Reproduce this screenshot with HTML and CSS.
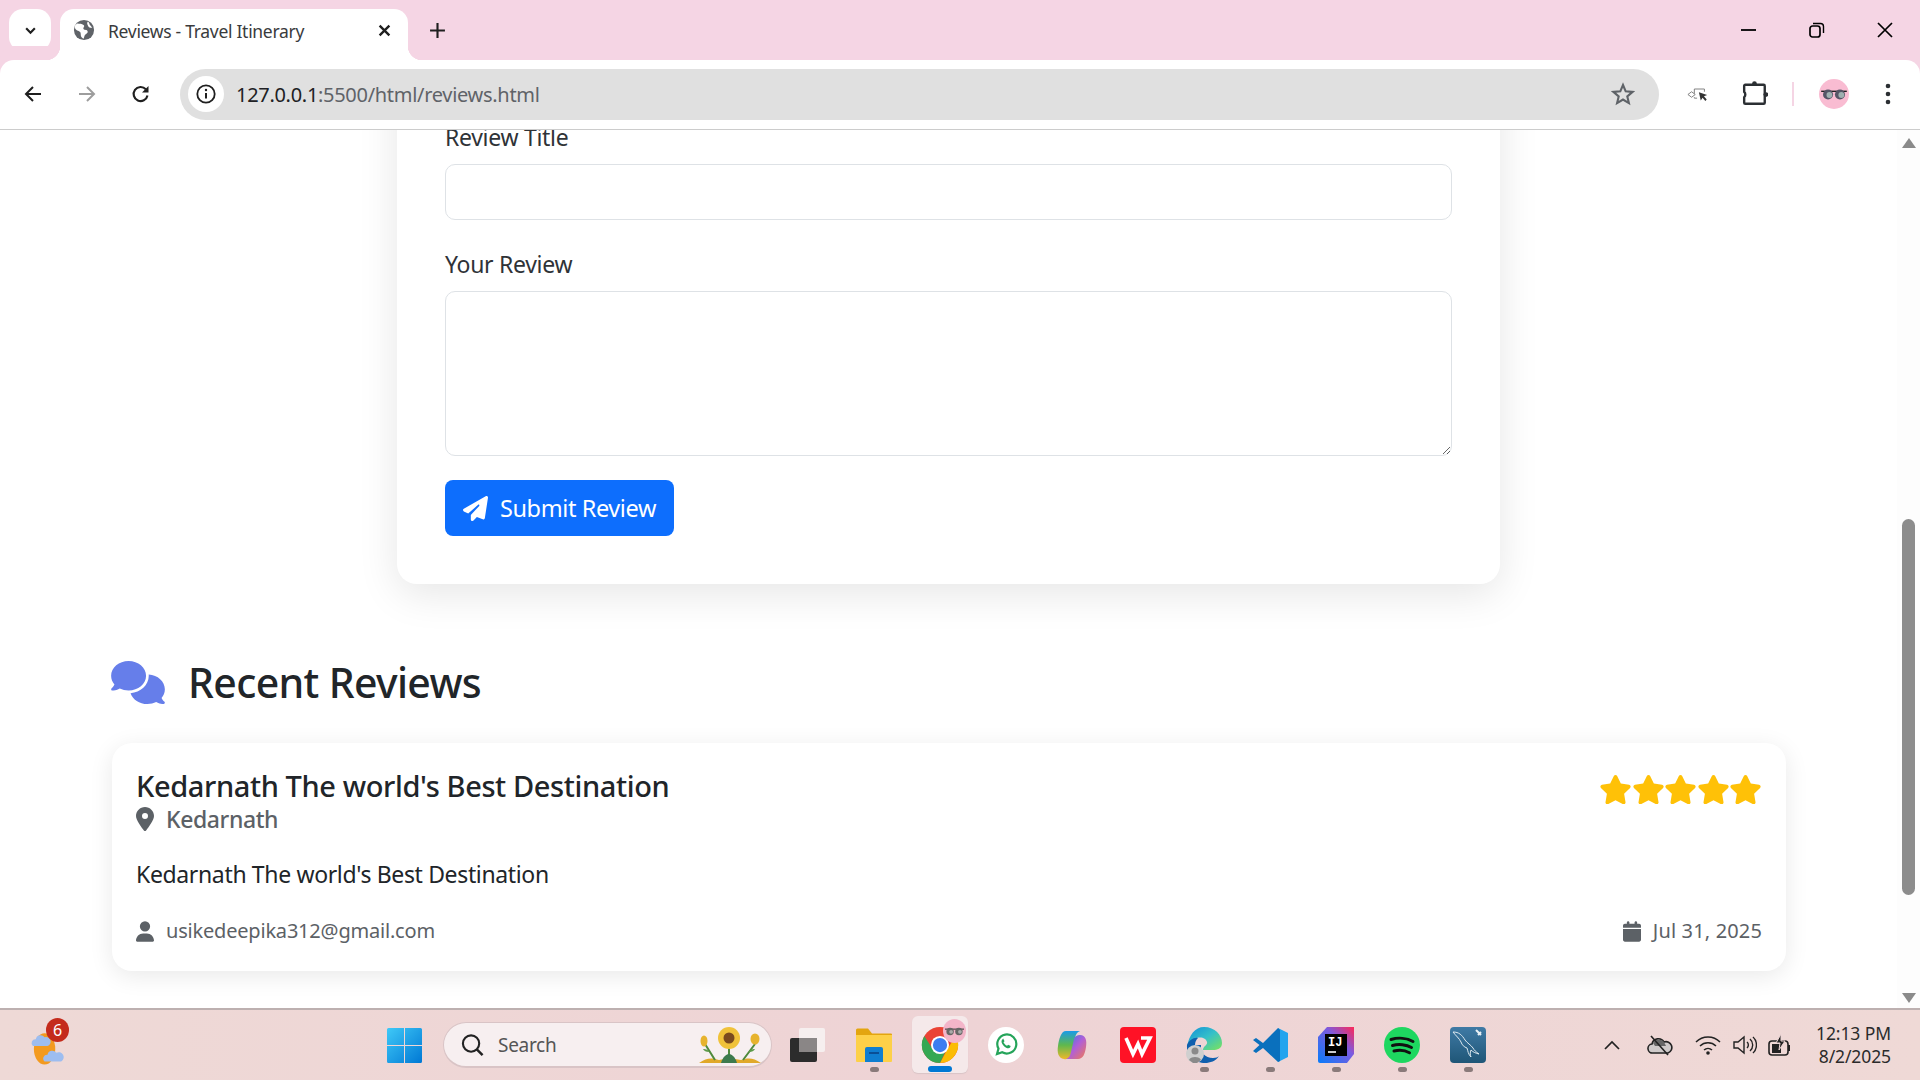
FILE: index.html
```html
<!DOCTYPE html>
<html lang="en">
<head>
<meta charset="utf-8">
<title>Reviews - Travel Itinerary</title>
<link rel="stylesheet" href="styles.css">
</head>
<body>
<header class="tabstrip">
  <div class="tab-search"><svg class="ic12" viewBox="0 0 12 12"><path d="M2 4l4 4 4-4" fill="none" stroke="#1f1f1f" stroke-width="2"/></svg></div>
  <div class="tab">
    <svg class="favicon" viewBox="0 0 24 24"><circle cx="12" cy="12" r="11" fill="#5f6368"/><path d="M4.500 5c3 .5 5 0 7 1.500s-1 3 0 4.500 4 .5 4.500 2.500-3 3-3.500 5-.5 2-1 3c-4-1.500-2.500-5-3.500-7s-4-1.500-5.500-4-.5-3.500 2-5.500zM16.500 3c2 1.500 1 3 2.500 4l2 2.500c-1.500.5-3.500 0-4.500-2s-1.500-3-.5-4.500z" fill="#fff"/></svg>
    <span class="tab-title">Reviews - Travel Itinerary</span>
    <svg class="tab-close" viewBox="0 0 12 12"><path d="M1.500 1.500l9 9m0-9l-9 9" stroke="#1f1f1f" stroke-width="2.200" fill="none"/></svg>
  </div>
  <svg class="newtab" viewBox="0 0 16 16"><path d="M8 1v14M1 8h14" stroke="#1f1f1f" stroke-width="2" fill="none"/></svg>
  <div class="winctl">
    <svg class="win-ic" viewBox="0 0 16 16"><path d="M0 8h15" stroke="#000" stroke-width="1.800"/></svg>
    <svg class="win-ic" viewBox="0 0 16 16"><rect x="1" y="4" width="10" height="11" rx="2.500" fill="none" stroke="#000" stroke-width="1.700"/><path d="M4 1.500h7.500a3 3 0 0 1 3 3V11" fill="none" stroke="#000" stroke-width="1.400"/></svg>
    <svg class="win-ic" viewBox="0 0 16 16"><path d="M1 1l14 14m0-14L1 15" stroke="#000" stroke-width="1.700" fill="none"/></svg>
  </div>
</header>

<nav class="toolbar">
  <svg class="nav-ic" viewBox="0 0 20 20"><path d="M18 10H3m7-7l-7 7 7 7" fill="none" stroke="#1f1f1f" stroke-width="2"/></svg>
  <svg class="nav-ic" viewBox="0 0 20 20"><path d="M2 10h15m-7-7l7 7-7 7" fill="none" stroke="#9d9d9d" stroke-width="2"/></svg>
  <svg class="nav-ic" viewBox="0 0 20 20"><path d="M16.500 11.500a7 7 0 1 1-1.700-6.200" fill="none" stroke="#1f1f1f" stroke-width="2.100"/><path d="M17.500 2v6.500H11z" fill="#1f1f1f"/></svg>
  <div class="omnibox">
    <div class="site-info"><svg class="info-ic" viewBox="0 0 20 20"><circle cx="10" cy="10" r="8.700" fill="none" stroke="#1f1f1f" stroke-width="1.800"/><path d="M10 9v5.500" stroke="#1f1f1f" stroke-width="2"/><circle cx="10" cy="6" r="1.200" fill="#1f1f1f"/></svg></div>
    <span class="url"><span class="url-host">127.0.0.1</span>:5500/html/reviews.html</span>
    <svg class="star-ic" viewBox="0 0 24 24"><path d="M12 3l2.700 6.300 6.800.6-5.200 4.500 1.600 6.700L12 17.500l-5.900 3.600 1.600-6.700L2.500 9.900l6.800-.6z" fill="none" stroke="#5f6368" stroke-width="2.100"/></svg>
  </div>
  <svg class="ext-cursor" viewBox="0 0 24 16"><path d="M1 8l4-3 4 3-4 3z" fill="none" stroke="#777" stroke-width="1"/><path d="M8 7V2h11v3M8 11v1h3" fill="none" stroke="#777" stroke-width="1"/><path d="M13 5.500l9 3-3.500 1.500 3 3.500-1.500 1.500-3-3.500-2 3z" fill="#333"/></svg>
  <svg class="puzzle" viewBox="0 0 24 24"><path d="M3 3.500h17a1 1 0 0 1 1 1V20a1 1 0 0 1-1 1H3a1 1 0 0 1-1-1v-5a3.500 3.500 0 0 0 0-5V4.500a1 1 0 0 1 1-1z" fill="none" stroke="#2b2f33" stroke-width="2.200"/><circle cx="11.500" cy="2.500" r="2.200" fill="#2b2f33"/><circle cx="22" cy="12.500" r="2.200" fill="#2b2f33"/></svg>
  <span class="tb-sep"></span>
  <div class="avatar"><svg class="glasses" viewBox="0 0 28 12"><path d="M0 2.500h28" stroke="#222" stroke-width="1.500"/><circle cx="7.500" cy="6" r="5.500" fill="#556"/><circle cx="20.500" cy="6" r="5.500" fill="#556"/><circle cx="9" cy="6.500" r="3.200" fill="#9fb0b0"/><circle cx="22" cy="6.500" r="3.200" fill="#9fb0b0"/></svg></div>
  <svg class="dots" viewBox="0 0 6 24"><circle cx="3" cy="4" r="2.300" fill="#2b2f33"/><circle cx="3" cy="12" r="2.300" fill="#2b2f33"/><circle cx="3" cy="20" r="2.300" fill="#2b2f33"/></svg>
</nav>

<div class="viewport">
  <main class="page">
    <section class="form-card">
      <div class="form-group">
        <label class="form-label" for="title">Review Title</label>
        <input class="form-control" id="title" type="text">
      </div>
      <div class="form-group">
        <label class="form-label" for="body">Your Review</label>
        <textarea class="form-control form-area" id="body"></textarea>
      </div>
      <button class="btn-submit" type="button">
        <svg class="plane" viewBox="0 0 512 512"><path d="M498.100 5.600c10.100 7 15.400 19.100 13.500 31.200l-64 416c-1.500 9.700-7.400 18.200-16 23s-18.900 5.400-28 1.600L284 427.700l-68.500 74.100c-8.900 9.700-22.900 12.900-35.200 8.100S160 493.200 160 480V396.400c0-4 1.500-7.800 4.200-10.700L331.800 202.800c5.800-6.300 5.600-16-.4-22s-15.700-6.400-22-.7L106 360.800 17.700 316.600C7.100 311.300 .3 300.700 0 288.900s5.900-22.800 16.100-28.700l448-256c10.700-6.100 23.900-5.500 34 1.400z"/></svg>
        Submit Review
      </button>
    </section>

    <h2 class="section-title">
      <svg class="comments" viewBox="0 0 640 512"><path d="M208 352c114.900 0 208-78.800 208-176S322.900 0 208 0S0 78.800 0 176c0 38.600 14.700 74.300 39.600 103.400c-3.500 9.400-8.700 17.700-14.200 24.700c-4.800 6.200-9.700 11-13.300 14.300c-1.800 1.600-3.300 2.900-4.300 3.700c-.5 .4-.9 .7-1.100 .8l-.2 .2 0 0 0 0C1 327.200-1.400 334.400 .8 340.900S9.100 352 16 352c21.800 0 43.800-5.600 62.100-12.500c9.200-3.500 17.800-7.400 25.300-11.400C134.100 343.300 169.800 352 208 352zM448 176c0 112.300-99.100 196.900-216.500 207C255.800 457.400 336.400 512 432 512c38.200 0 73.900-8.700 104.700-23.900c7.500 4 16 7.900 25.200 11.400c18.300 6.900 40.300 12.500 62.100 12.500c6.900 0 13.100-4.500 15.200-11.100c2.100-6.600-.2-13.800-5.800-17.900l0 0 0 0-.2-.2c-.2-.2-.6-.4-1.100-.8c-1-.8-2.500-2-4.300-3.700c-3.600-3.300-8.500-8.100-13.300-14.300c-5.500-7-10.700-15.400-14.200-24.700c24.900-29 39.600-64.700 39.600-103.400c0-92.800-84.900-168.900-192.600-175.500c.4 5.100 .6 10.300 .6 15.500z"/></svg>
      <span>Recent Reviews</span>
    </h2>

    <article class="review-card">
      <div class="review-head">
        <div>
          <h3 class="review-title">Kedarnath The world's Best Destination</h3>
          <p class="review-place"><svg class="pin" viewBox="0 0 384 512"><path d="M215.700 499.200C267 435 384 279.400 384 192C384 86 298 0 192 0S0 86 0 192c0 87.400 117 243 168.300 307.200c12.300 15.300 35.100 15.300 47.400 0zM192 128a64 64 0 1 1 0 128 64 64 0 1 1 0-128z"/></svg>Kedarnath</p>
        </div>
        <div class="stars">
          <svg class="star" viewBox="0 0 576 512"><path d="M316.900 18C311.600 7 300.400 0 288.100 0s-23.400 7-28.800 18L195 150.300 51.400 171.500c-12 1.800-22 10.200-25.700 21.700s-.7 24.200 7.900 32.700L137.800 329 113.200 474.700c-2 12 3 24.200 12.900 31.300s23 8 33.800 2.300l128.300-68.500 128.300 68.500c10.800 5.700 23.900 4.900 33.800-2.300s14.900-19.300 12.900-31.300L438.500 329 542.700 225.900c8.600-8.500 11.700-21.200 7.900-32.700s-13.700-19.900-25.700-21.700L381.200 150.300 316.900 18z"/></svg>
          <svg class="star" viewBox="0 0 576 512"><path d="M316.900 18C311.600 7 300.400 0 288.100 0s-23.400 7-28.800 18L195 150.300 51.400 171.500c-12 1.800-22 10.200-25.700 21.700s-.7 24.200 7.900 32.700L137.800 329 113.200 474.700c-2 12 3 24.200 12.900 31.300s23 8 33.800 2.300l128.300-68.500 128.300 68.500c10.800 5.700 23.900 4.900 33.800-2.300s14.900-19.300 12.900-31.300L438.500 329 542.700 225.900c8.600-8.500 11.700-21.200 7.900-32.700s-13.700-19.900-25.700-21.700L381.200 150.300 316.900 18z"/></svg>
          <svg class="star" viewBox="0 0 576 512"><path d="M316.900 18C311.600 7 300.400 0 288.100 0s-23.400 7-28.800 18L195 150.300 51.400 171.500c-12 1.800-22 10.200-25.700 21.700s-.7 24.200 7.900 32.700L137.800 329 113.200 474.700c-2 12 3 24.200 12.900 31.300s23 8 33.800 2.300l128.300-68.500 128.300 68.500c10.800 5.700 23.900 4.900 33.800-2.300s14.900-19.300 12.900-31.300L438.500 329 542.700 225.900c8.600-8.500 11.700-21.200 7.900-32.700s-13.700-19.900-25.700-21.700L381.200 150.300 316.900 18z"/></svg>
          <svg class="star" viewBox="0 0 576 512"><path d="M316.900 18C311.600 7 300.400 0 288.100 0s-23.400 7-28.800 18L195 150.300 51.400 171.500c-12 1.800-22 10.200-25.700 21.700s-.7 24.200 7.900 32.700L137.800 329 113.200 474.700c-2 12 3 24.200 12.900 31.300s23 8 33.800 2.300l128.300-68.500 128.300 68.500c10.800 5.700 23.900 4.900 33.800-2.300s14.900-19.300 12.900-31.300L438.500 329 542.700 225.900c8.600-8.500 11.700-21.200 7.900-32.700s-13.700-19.900-25.700-21.700L381.200 150.300 316.900 18z"/></svg>
          <svg class="star" viewBox="0 0 576 512"><path d="M316.900 18C311.600 7 300.400 0 288.100 0s-23.400 7-28.800 18L195 150.300 51.400 171.500c-12 1.800-22 10.200-25.700 21.700s-.7 24.200 7.900 32.700L137.800 329 113.200 474.700c-2 12 3 24.200 12.900 31.300s23 8 33.800 2.300l128.300-68.500 128.300 68.500c10.800 5.700 23.900 4.900 33.800-2.300s14.900-19.300 12.900-31.300L438.500 329 542.700 225.900c8.600-8.500 11.700-21.200 7.900-32.700s-13.700-19.900-25.700-21.700L381.200 150.300 316.900 18z"/></svg>
        </div>
      </div>
      <p class="review-body">Kedarnath The world's Best Destination</p>
      <div class="review-meta">
        <span class="meta-item"><svg class="meta-ic" viewBox="0 0 448 512"><path d="M224 256A128 128 0 1 0 224 0a128 128 0 1 0 0 256zm-45.700 48C79.800 304 0 383.800 0 482.300C0 498.700 13.300 512 29.700 512H418.300c16.400 0 29.700-13.300 29.700-29.700C448 383.800 368.200 304 269.700 304H178.300z"/></svg>usikedeepika312@gmail.com</span>
        <span class="meta-item meta-date"><svg class="meta-ic" viewBox="0 0 448 512"><path d="M96 32V64H48C21.500 64 0 85.500 0 112v48H448V112c0-26.500-21.500-48-48-48H352V32c0-17.700-14.300-32-32-32s-32 14.300-32 32V64H160V32c0-17.700-14.300-32-32-32S96 14.300 96 32zM448 192H0V464c0 26.500 21.500 48 48 48H400c26.500 0 48-21.500 48-48V192z"/></svg>Jul 31, 2025</span>
      </div>
    </article>
  </main>
  <aside class="scrollbar">
    <span class="arrow-up"></span>
    <span class="thumb"></span>
    <span class="arrow-down"></span>
  </aside>
</div>

<footer class="taskbar">
  <div class="weather">
    <svg class="weather-ic" viewBox="0 0 36 42"><ellipse cx="15" cy="25" rx="11" ry="16" fill="#f39a1f"/><path d="M3 22a4 4 0 0 1 3-7 5 5 0 0 1 9-2 4 4 0 0 1 3 9z" fill="#9dbdf0"/><path d="M15 38a4 4 0 0 1 3-7 5 5 0 0 1 9-2 5 5 0 0 1 5 9z" fill="#9dbdf0"/></svg>
    <span class="badge">6</span>
  </div>
  <svg class="start" viewBox="0 0 35 35">
    <defs><linearGradient id="wing" x1="0" y1="0" x2="1" y2="1"><stop offset="0" stop-color="#3fc9f7"/><stop offset="1" stop-color="#0078d4"/></linearGradient></defs>
    <path d="M0 1.500A1.500 1.500 0 0 1 1.500 0H17v17H0zM18 0h15.500A1.500 1.500 0 0 1 35 1.500V17H18zM0 18h17v17H1.500A1.500 1.500 0 0 1 0 33.500zM18 18h17v15.500a1.500 1.500 0 0 1-1.500 1.500H18z" fill="url(#wing)"/>
  </svg>
  <div class="search">
    <svg class="search-ic" viewBox="0 0 24 24"><circle cx="10.500" cy="10.500" r="8.500" fill="none" stroke="#222" stroke-width="2.200"/><path d="M16.500 16.500l6 6" stroke="#222" stroke-width="2.600"/></svg>
    <span class="search-text">Search</span>
    <svg class="flower" viewBox="0 0 62 38">
      <path d="M0 37c8-6 14-5 20-3l10-2 12 2c6-2 12-3 20 3z" fill="#e0a92a"/><path d="M30 20v15M6 18l10 16M56 18l-12 16" stroke="#4f8a3c" stroke-width="2" fill="none"/><path d="M22 37c2-7 6-9 8-9s6 2 8 9z" fill="#3d7a4d"/><path d="M10 26c-3 0-5-1-6-3 3 0 6 1 6 3zM50 26c3 0 5-1 6-3-3 0-6 1-6 3z" fill="#5c9a4a"/>
      <circle cx="30" cy="12" r="11" fill="#f0c23a"/><circle cx="30" cy="12" r="5.500" fill="#7a4a1e"/>
      <ellipse cx="5" cy="15" rx="3.500" ry="5.500" fill="#e7b32d"/><ellipse cx="56" cy="13" rx="4.500" ry="5.500" fill="#e7b32d"/>
    </svg>
  </div>
  <div class="apps">
    <div class="app"><svg class="app-ic" viewBox="0 0 36 36"><rect x="0" y="11" width="27" height="24" rx="2" fill="#2c2c2c"/><rect x="9" y="1" width="26" height="24" rx="2" fill="#f7f3f3" fill-opacity=".85"/><rect x="9" y="11" width="18" height="14" fill="#8a8686"/></svg></div>
    <div class="app app-open"><svg class="app-ic" viewBox="0 0 36 36"><path d="M0 3a1.500 1.500 0 0 1 1.500-1.500H12l4 5h19a1 1 0 0 1 1 1V12H0z" fill="#e3a50f"/><path d="M0 8h36v26a1 1 0 0 1-1 1H1a1 1 0 0 1-1-1z" fill="#fdd048"/><path d="M9 22a2 2 0 0 1 2-2h14a2 2 0 0 1 2 2v13H9z" fill="#0f7ed0"/><path d="M13 26h10" stroke="#0a4f95" stroke-width="2"/></svg></div>
    <div class="app app-active">
      <svg class="app-ic chrome" viewBox="0 0 40 40"><circle cx="20" cy="20" r="19" fill="#ea4335"/><path d="M36.500 10.500A19 19 0 0 1 20 39L28 24z" fill="#fbbc04"/><path d="M3.500 10.500A19 19 0 0 0 20 39L27 24 12 24z" fill="#34a853"/><circle cx="20" cy="20" r="9.500" fill="#fff"/><circle cx="20" cy="20" r="7.500" fill="#3c7df0"/></svg>
      <span class="app-profile"><svg class="glasses-sm" viewBox="0 0 28 12"><path d="M0 2.500h28" stroke="#333" stroke-width="1.500"/><circle cx="7.500" cy="6" r="5.500" fill="#666"/><circle cx="20.500" cy="6" r="5.500" fill="#666"/><circle cx="9" cy="6.500" r="2.800" fill="#aaa"/><circle cx="22" cy="6.500" r="2.800" fill="#aaa"/></svg></span>
    </div>
    <div class="app"><svg class="app-ic" viewBox="0 0 36 36"><circle cx="18" cy="18" r="18" fill="#fff"/><path d="M9 27l1.500-5.400a9.500 9.500 0 1 1 3.700 3.700z" fill="none" stroke="#25a45a" stroke-width="2.200"/><path d="M14.300 12.500c-1.500 1.300-1 3.800 1.500 6.400s5 3 6.300 1.700l.6-1.500-2.600-1.400-1 1c-1.700-.7-2.900-1.900-3.600-3.500l1-1-1.300-2.700z" fill="#25a45a"/></svg></div>
    <div class="app"><svg class="app-ic" viewBox="0 0 36 36"><defs><linearGradient id="cop1" x1="0" y1="0" x2="0" y2="1"><stop offset="0" stop-color="#1a9be8"/><stop offset=".5" stop-color="#5fb84d"/><stop offset="1" stop-color="#f0b82a"/></linearGradient><linearGradient id="cop2" x1="0" y1="0" x2="1" y2="1"><stop offset="0" stop-color="#2e7be0"/><stop offset=".5" stop-color="#b05fd8"/><stop offset="1" stop-color="#f27b50"/></linearGradient></defs><path d="M12 4h14c-3 1-4 3-5 7l-3 15c-1 4-4 7-8 6-6-1-7-7-6-13 1-7 3-15 8-15z" fill="url(#cop1)"/><path d="M24 32H12c3-1 4-3 5-7l3-13c1-3 3-4 6-4 6 0 7 6 6 12-1 7-3 12-8 12z" fill="url(#cop2)"/></svg></div>
    <div class="app"><svg class="app-ic" viewBox="0 0 36 36"><rect width="36" height="36" rx="4" fill="#ff1226"/><path d="M6 11l7 16 5-10 4 10 8-16h-9" fill="none" stroke="#fff" stroke-width="3.600"/></svg></div>
    <div class="app app-open"><svg class="app-ic" viewBox="0 0 36 36"><defs><linearGradient id="edge" x1="0" y1="0" x2="1" y2="1"><stop offset="0" stop-color="#0f8ed8"/><stop offset=".5" stop-color="#35c0c9"/><stop offset="1" stop-color="#7be35a"/></linearGradient></defs><path d="M18 0c11 0 18 8 18 16 0 6-5 7-9 7H17c0-4 5-5 4-8-1-4-7-6-12-3-4 3-7 7-8 8C3 8 9 0 18 0z" fill="url(#edge)"/><path d="M15 18c-1 7 4 13 12 13 3 0 5-1 6-2-3 5-9 7-14 7C10 36 0 30 1 18c2-5 7-8 11-7-2 2-3 4-3 7z" fill="#0f5fae"/><circle cx="9" cy="27" r="9" fill="#cfcfcf"/><circle cx="9" cy="24" r="3.500" fill="#8a8a8a"/><path d="M3 33c1-4 11-4 12 0l-4 3H7z" fill="#8a8a8a"/></svg></div>
    <div class="app app-open"><svg class="app-ic" viewBox="0 0 36 36"><path d="M26 1l10 5v24l-10 5z" fill="#22a4ee"/><path d="M26 1L11 16l-7-5-3 2 6.500 5L1 24l3 2 7-5 15 14 2-1V3z" fill="#0a70bd"/></svg></div>
    <div class="app app-open"><svg class="app-ic" viewBox="0 0 36 36"><defs><linearGradient id="ij" x1="0" y1="1" x2="1" y2="0"><stop offset="0" stop-color="#087cfa"/><stop offset=".6" stop-color="#7b5be0"/><stop offset="1" stop-color="#fe2857"/></linearGradient></defs><path d="M9 0h27v27l-7 9H2a2 2 0 0 1-2-2V10z" fill="url(#ij)"/><rect x="7" y="7" width="22" height="22" fill="#000"/><text class="ij-text" x="10" y="19">IJ</text><path d="M10 25h8" stroke="#fff" stroke-width="1.600"/></svg></div>
    <div class="app app-open"><svg class="app-ic" viewBox="0 0 36 36"><circle cx="18" cy="18" r="18" fill="#1ed760"/><path d="M7 12.500c7-2 16-1.500 22 2M8.500 18.500c6-1.700 14-1 19 2M10 24c5-1.300 11-.8 15.500 1.700" fill="none" stroke="#111" stroke-width="3" stroke-linecap="round"/></svg></div>
    <div class="app app-open"><svg class="app-ic" viewBox="0 0 36 36"><defs><linearGradient id="my" x1="0" y1="0" x2="0" y2="1"><stop offset="0" stop-color="#3f7aa5"/><stop offset="1" stop-color="#1f5677"/></linearGradient></defs><rect width="36" height="36" rx="4" fill="url(#my)"/><path d="M3 5c6 0 9 3 12 8 2 3 6 5 8 8 1 2 3 4 6 6-4-1-6-2-8-4-1 3-1 5 0 7-3-3-3-6-4-9-3-1-5-3-6-6C9 11 6 9 3 5z" fill="none" stroke="#dbe8f0" stroke-width="1"/><path d="M26 3l5 5m-3 0l3-3" stroke="#e8f0f5" stroke-width="2"/></svg></div>
  </div>
  <div class="tray">
    <svg class="tray-chev" viewBox="0 0 16 10"><path d="M1 9l7-7 7 7" fill="none" stroke="#222" stroke-width="1.700"/></svg>
    <svg class="tray-cloud" viewBox="0 0 26 22"><path d="M6 19a4.500 4.500 0 0 1-1-9 6.500 6.500 0 0 1 12-2 5 5 0 0 1 4 11z" fill="#cfcaca" stroke="#222" stroke-width="1.600"/><path d="M6 9a6.500 6.500 0 0 1 11-1l2 4H8z" fill="#666"/><path d="M4 2l17 19" stroke="#222" stroke-width="1.600"/></svg>
    <svg class="tray-wifi" viewBox="0 0 26 20"><path d="M1 7a17 17 0 0 1 24 0M5 11a11.500 11.500 0 0 1 16 0M9 15a6 6 0 0 1 8 0" fill="none" stroke="#222" stroke-width="1.500"/><circle cx="13" cy="18" r="1.800" fill="#222"/></svg>
    <svg class="tray-vol" viewBox="0 0 24 20"><path d="M1 7h4l6-5v16l-6-5H1z" fill="none" stroke="#222" stroke-width="1.400"/><path d="M14 7a4 4 0 0 1 0 6M17 4a8 8 0 0 1 0 12M20 2a11 11 0 0 1 0 16" fill="none" stroke="#222" stroke-width="1.400"/></svg>
    <svg class="tray-batt" viewBox="0 0 24 22"><rect x="1" y="7" width="19" height="14" rx="3" fill="none" stroke="#222" stroke-width="1.600"/><path d="M21 11v6" stroke="#222" stroke-width="2"/><path d="M4 10h9v9H4z" fill="#222"/><path d="M13 0l-5 9h4l-1 7 6-9h-4z" fill="#222" stroke="#eed7d7" stroke-width="1"/></svg>
    <div class="clock"><span>12:13 PM</span><span>8/2/2025</span></div>
  </div>
</footer>
</body>
</html>
```
FILE: styles.css
```css
* { box-sizing: border-box; }
html, body { height: 100%; }
body {
  margin: 0;
  height: 100vh;
  overflow: hidden;
  display: flex;
  flex-direction: column;
  font-family: "Noto Sans", "Open Sans", sans-serif;
  color: #212529;
  background: #fff;
}
svg { display: block; flex: none; }

/* tab strip */
.tabstrip {
  height: 60px;
  flex: none;
  display: flex;
  align-items: flex-start;
  padding: 9px 0 0 9px;
  background: #f5d5e4;
}
.tab-search {
  width: 42px;
  height: 42px;
  border-radius: 14px;
  background: #fff;
  display: flex;
  align-items: center;
  justify-content: center;
}
.ic12 { width: 13px; height: 13px; }
.tab {
  position: relative;
  margin-left: 9px;
  width: 348px;
  height: 51px;
  background: #fff;
  border-radius: 14px 14px 0 0;
  display: flex;
  align-items: center;
  padding: 0 17px 9px 13px;
}
.tab::before, .tab::after {
  content: "";
  position: absolute;
  bottom: 0;
  width: 14px;
  height: 14px;
}
.tab::before { left: -14px; background: radial-gradient(circle at 0 0, #f5d5e4 14px, #fff 14.5px); }
.tab::after { right: -14px; background: radial-gradient(circle at 100% 0, #f5d5e4 14px, #fff 14.5px); }
.favicon { width: 22px; height: 22px; }
.tab-title {
  flex: 1;
  margin-left: 13px;
  padding-top: 2px;
  font-size: 17.500px;
  letter-spacing: -0.3px;
  color: #3a3b3d;
  white-space: nowrap;
}
.tab-close { width: 13px; height: 13px; }
.newtab { width: 17px; height: 17px; margin: 13px 0 0 21px; }
.winctl {
  margin-left: auto;
  display: flex;
  gap: 52px;
  padding: 13px 27px 0 0;
}
.win-ic { width: 16px; height: 16px; }

/* toolbar */
.toolbar {
  height: 70px;
  flex: none;
  display: flex;
  align-items: center;
  padding: 0 0 1px 23px;
  background: #fff;
  border-bottom: 1px solid #ccc;
  border-radius: 14px 14px 0 0;
  box-shadow: 0 -14px 0 0 #f5d5e4;
}
.nav-ic { width: 20px; height: 20px; margin-right: 34px; }
.nav-ic:nth-of-type(3) { margin-right: 29px; }
.omnibox {
  width: 1479px;
  height: 51px;
  border-radius: 26px;
  background: #e0e0e0;
  display: flex;
  align-items: center;
  padding: 0 24px 0 8px;
}
.site-info {
  width: 36px;
  height: 36px;
  border-radius: 50%;
  background: #fff;
  display: flex;
  align-items: center;
  justify-content: center;
}
.info-ic { width: 20px; height: 20px; }
.url {
  flex: 1;
  margin-left: 12px;
  font-size: 20px;
  letter-spacing: -0.3px;
  color: #5f6368;
  white-space: nowrap;
}
.url-host { color: #202124; }
.star-ic { width: 24px; height: 24px; }
.ext-cursor { width: 22px; height: 15px; margin-left: 28px; }
.puzzle { width: 26px; height: 26px; margin-left: 33px; }
.tb-sep { width: 2px; height: 24px; margin-left: 24px; background: #f5d5e4; }
.avatar {
  width: 30px;
  height: 30px;
  margin-left: 25px;
  border-radius: 50%;
  background: #f9bcd2;
  display: flex;
  align-items: center;
  justify-content: center;
}
.glasses { width: 26px; height: 11px; }
.dots { width: 6px; height: 24px; margin-left: 36px; }

/* viewport */
.viewport {
  flex: 1;
  min-height: 0;
  display: flex;
  overflow: hidden;
}
.page {
  flex: 1;
  min-width: 0;
  padding: 0 111px 0 112px;
  overflow: hidden;
}
.form-card {
  width: 1103px;
  margin: -120px 0 0 285px;
  padding: 112px 48px 48px;
  background: #fff;
  border-radius: 20px;
  box-shadow: 0 10px 40px rgba(0, 0, 0, .1);
}
.form-group { margin-bottom: 24px; }
.form-group:first-child { margin-bottom: 29px; }
.form-label {
  display: block;
  font-size: 23px;
  line-height: 30px;
  margin-bottom: 12px;
  letter-spacing: -0.3px;
  color: #2f3337;
}
.form-control {
  display: block;
  width: 100%;
  height: 56px;
  padding: 8px 15px;
  border: 1.500px solid #dee2e6;
  border-radius: 10px;
  background: #fff;
  font: inherit;
}
.form-area { height: 165px; resize: both; }
.btn-submit {
  width: 229px;
  height: 56px;
  border: 0;
  border-radius: 8px;
  background: #0d6efd;
  color: #fff;
  font-family: inherit;
  font-size: 23.500px;
  letter-spacing: -0.4px;
  display: flex;
  align-items: center;
  padding: 0 0 0 18px;
  gap: 12px;
  white-space: nowrap;
}
.plane { width: 25px; height: 25px; fill: #fff; }

.section-title {
  margin: 70px 0 0;
  height: 56px;
  display: flex;
  align-items: center;
  font-size: 41px;
  font-weight: 500;
  letter-spacing: -0.65px;
  color: #212529;
}
.comments { width: 54px; height: 43px; fill: #667eea; margin: 0 23px 0 -1px; }

.review-card {
  margin-top: 33px;
  height: 228px;
  padding: 25px 24px 24px;
  background: #fff;
  border-radius: 20px;
  box-shadow: 0 5px 24px rgba(0, 0, 0, .09);
}
.review-head {
  display: flex;
  justify-content: space-between;
  align-items: flex-start;
}
.review-title {
  margin: 0;
  font-size: 29px;
  line-height: 36px;
  font-weight: 500;
  letter-spacing: -0.38px;
  color: #212529;
}
.review-place {
  margin: 0;
  display: flex;
  align-items: center;
  gap: 12px;
  font-size: 23px;
  line-height: 30px;
  font-weight: 500;
  letter-spacing: -0.4px;
  color: #5c6166;
}
.pin { width: 18px; height: 24px; fill: #5c6166; }
.stars { display: flex; gap: 0; padding-top: 7px; }
.star { width: 33px; height: 29.300px; margin-left: -0.6px; fill: #ffc107; }
.review-body {
  margin: 24px 0 0;
  font-size: 23px;
  line-height: 32px;
  letter-spacing: -0.35px;
  color: #212529;
}
.review-meta {
  margin-top: 27px;
  display: flex;
  justify-content: space-between;
}
.meta-item {
  display: flex;
  align-items: center;
  gap: 12px;
  font-size: 20px;
  line-height: 28px;
  letter-spacing: -0.2px;
  color: #5c6166;
}
.meta-date { letter-spacing: .15px; }
.meta-ic { width: 18px; height: 21px; fill: #5c6166; }

/* scrollbar */
.scrollbar {
  width: 23px;
  flex: none;
  display: flex;
  flex-direction: column;
  align-items: center;
  background: #fdfdfd;
  padding: 8px 0 5px;
}
.arrow-up, .arrow-down {
  width: 0;
  height: 0;
  border-left: 7px solid transparent;
  border-right: 7px solid transparent;
}
.arrow-up { border-bottom: 10px solid #8a8a8a; }
.arrow-down { border-top: 10px solid #8a8a8a; margin-top: auto; }
.thumb {
  width: 13px;
  height: 376px;
  margin-top: 371px;
  border-radius: 7px;
  background: #8c8c8c;
}

/* taskbar */
.taskbar {
  height: 72px;
  flex: none;
  display: flex;
  align-items: center;
  padding-left: 30px;
  border-top: 2px solid #bdb0b0;
  background: linear-gradient(90deg, #eed9d6, #eed3d5 50%, #efd9d6);
}
.weather { position: relative; width: 35px; height: 42px; margin-right: 322px; }
.weather-ic { width: 35px; height: 42px; }
.badge {
  position: absolute;
  top: -6px;
  left: 16px;
  width: 23px;
  height: 24px;
  border-radius: 50%;
  background: #c42b1c;
  color: #fff;
  font-size: 16px;
  line-height: 24px;
  text-align: center;
}
.start { width: 35px; height: 35px; margin-right: 21px; }
.search {
  width: 329px;
  height: 46px;
  border-radius: 23px;
  background: #f7eff0;
  border: 1px solid #d9c4c6;
  border-bottom-width: 2px;
  display: flex;
  align-items: center;
  padding: 0 10px 0 17px;
}
.search-ic { width: 23px; height: 24px; }
.search-text {
  flex: 1;
  margin-left: 14px;
  font-size: 19px;
  letter-spacing: -0.3px;
  color: #555;
}
.flower { width: 62px; height: 38px; }
.apps { display: flex; margin-left: 3px; height: 100%; }
.app {
  position: relative;
  width: 66px;
  height: 100%;
  display: flex;
  align-items: center;
  justify-content: center;
}
.app-ic { width: 36px; height: 36px; }
.app-open::after {
  content: "";
  position: absolute;
  left: 29px;
  bottom: 8px;
  width: 9px;
  height: 5px;
  border-radius: 3px;
  background: #8a7a7a;
}
.app-active::before {
  content: "";
  position: absolute;
  left: 5px;
  top: 6px;
  width: 56px;
  height: 57px;
  border-radius: 6px;
  background: #f5e9ea;
  box-shadow: 0 1px 1px #d9c4c6;
}
.app-active::after {
  content: "";
  position: absolute;
  left: 21px;
  bottom: 8px;
  width: 24px;
  height: 6px;
  border-radius: 3px;
  background: #0078d4;
}
.chrome { position: relative; width: 38px; height: 38px; }
.app-profile {
  position: absolute;
  top: 9px;
  left: 36px;
  width: 23px;
  height: 24px;
  border-radius: 50%;
  background: #f3b5c9;
  display: flex;
  align-items: center;
  justify-content: center;
}
.glasses-sm { width: 19px; height: 9px; }
.ij-text { font-family: "Liberation Mono", monospace; font-size: 12px; font-weight: 700; fill: #fff; }
.tray {
  margin-left: auto;
  display: flex;
  align-items: center;
  padding-right: 29px;
}
.tray-chev { width: 16px; height: 10px; }
.tray-cloud { width: 26px; height: 22px; margin-left: 27px; }
.tray-wifi { width: 26px; height: 20px; margin-left: 22px; }
.tray-vol { width: 24px; height: 20px; margin-left: 12px; }
.tray-batt { width: 24px; height: 22px; margin-left: 11px; }
.clock {
  margin-left: 24px;
  display: flex;
  flex-direction: column;
  align-items: flex-end;
  font-size: 17.500px;
  line-height: 23px;
  letter-spacing: -0.1px;
  color: #2b2b2b;
}
```
